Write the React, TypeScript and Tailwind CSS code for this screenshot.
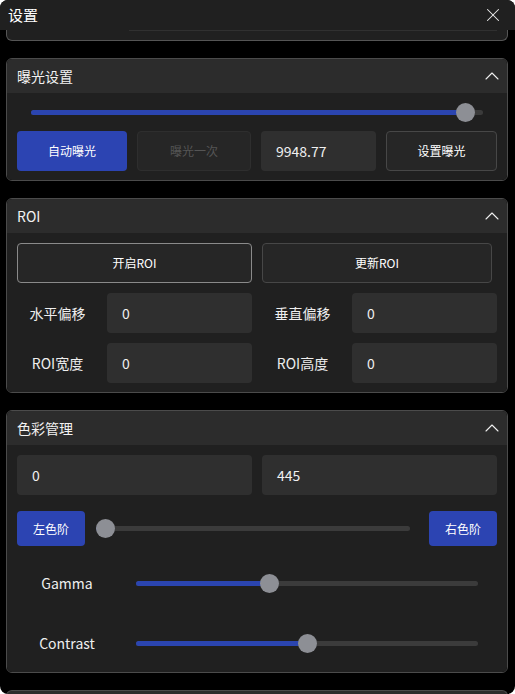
import { X, ChevronUp } from "lucide-react";

const font = { fontFamily: '"Noto Sans CJK SC", "Noto Sans", sans-serif' };

const Slider = ({ value, className = "" }: { value: number; className?: string }) => (
  <div className={`relative h-[18px] flex items-center ${className}`}>
    <div className="w-full h-[5px] rounded-full bg-[#3b3b3b]" />
    <div
      className="absolute left-0 h-[5px] rounded-full bg-[#2b45b0]"
      style={{ width: `${value}%` }}
    />
    <div
      className="absolute w-[19px] h-[19px] -ml-[9px] rounded-full bg-[#8d8f95]"
      style={{ left: `${value}%` }}
    />
  </div>
);

const Panel = ({ title, children }: { title: string; children: React.ReactNode }) => (
  <div className="ml-[6px] mr-[7px] mt-[17px] rounded-md border border-[#4b4b4b] overflow-hidden">
    <div className="h-[34px] bg-[#2c2c2c] flex items-center justify-between pl-[10px] pr-[3px]">
      <span className="text-[14px] text-[#f2f2f2]">{title}</span>
      <ChevronUp className="w-6 h-6 text-[#eeeeee]" strokeWidth={1.1} />
    </div>
    <div className="bg-[#202020] px-[10px] pt-[10px] pb-[9px]">{children}</div>
  </div>
);

const Input = ({ value, className = "" }: { value: string; className?: string }) => (
  <div
    className={`h-[40px] rounded-[4px] bg-[#2f2f2f] flex items-center pl-[15px] text-[14px] text-[#f0f0f0] ${className}`}
  >
    {value}
  </div>
);

const LabeledInput = ({ label }: { label: string }) => (
  <div className="flex items-center">
    <div className="w-[90px] pr-[9px] text-center text-[14px] text-[#eeeeee]">{label}</div>
    <Input value="0" className="flex-1" />
  </div>
);

export default function App() {
  return (
    <div className="w-[515px] h-[694px] bg-white" style={font}>
      <div className="w-full h-full rounded-[8px] bg-black overflow-hidden">
        <div className="h-[30px] bg-[#202020] flex items-center justify-between pl-[8px] pr-[11px]">
          <span className="text-[15px] text-white">设置</span>
          <X className="w-[22px] h-[22px] text-[#eeeeee]" strokeWidth={1.1} />
        </div>

        <div className="ml-[6px] mr-[7px] h-[11px] rounded-b-md border border-t-0 border-[#555] bg-[#202020]">
          <div className="ml-[122px] w-[368px] h-px bg-[#303030]" />
        </div>

        <Panel title="曝光设置">
          <Slider value={96} className="mx-[14px] mb-[10px]" />
          <div className="flex gap-[10px] text-[12px]">
            <button className="w-[110px] h-[40px] rounded-[4px] bg-[#2c44b2] text-white">
              自动曝光
            </button>
            <button className="w-[114px] h-[40px] rounded-[4px] bg-[#262626] border border-[#2e2e2e] text-[#555555]">
              曝光一次
            </button>
            <Input value="9948.77" className="w-[115px]" />
            <button className="w-[111px] h-[40px] rounded-[4px] bg-[#262626] border border-[#474747] text-white">
              设置曝光
            </button>
          </div>
        </Panel>

        <Panel title="ROI">
          <div className="grid grid-cols-2 gap-[10px]">
            <button className="h-[40px] rounded-[4px] bg-[#262626] border border-[#8a8a8a] text-[12px] text-white">
              开启ROI
            </button>
            <button className="h-[40px] mr-[5px] rounded-[4px] bg-[#262626] border border-[#474747] text-[12px] text-white">
              更新ROI
            </button>
            <LabeledInput label="水平偏移" />
            <LabeledInput label="垂直偏移" />
            <LabeledInput label="ROI宽度" />
            <LabeledInput label="ROI高度" />
          </div>
        </Panel>

        <Panel title="色彩管理">
          <div className="grid grid-cols-2 gap-[10px]">
            <Input value="0" />
            <Input value="445" />
          </div>
          <div className="flex items-center mt-[16px]">
            <button className="w-[68px] h-[35px] rounded-[4px] bg-[#2c44b2] text-[12px] text-white">
              左色阶
            </button>
            <Slider value={3} className="flex-1 ml-[11px] mr-[19px]" />
            <button className="w-[68px] h-[35px] rounded-[4px] bg-[#2c44b2] text-[12px] text-white">
              右色阶
            </button>
          </div>
          <div className="flex items-center h-[40px] mt-[17px]">
            <div className="w-[100px] text-center text-[14px] text-[#eeeeee]">Gamma</div>
            <Slider value={39} className="flex-1 mx-[19px]" />
          </div>
          <div className="flex items-center h-[40px] mt-[20px]">
            <div className="w-[100px] text-center text-[14px] text-[#eeeeee]">Contrast</div>
            <Slider value={50} className="flex-1 mx-[19px]" />
          </div>
        </Panel>

        <div className="ml-[6px] mr-[7px] mt-[17px] h-[20px] rounded-t-md border border-b-0 border-[#4b4b4b] bg-[#2c2c2c]" />
      </div>
    </div>
  );
}
